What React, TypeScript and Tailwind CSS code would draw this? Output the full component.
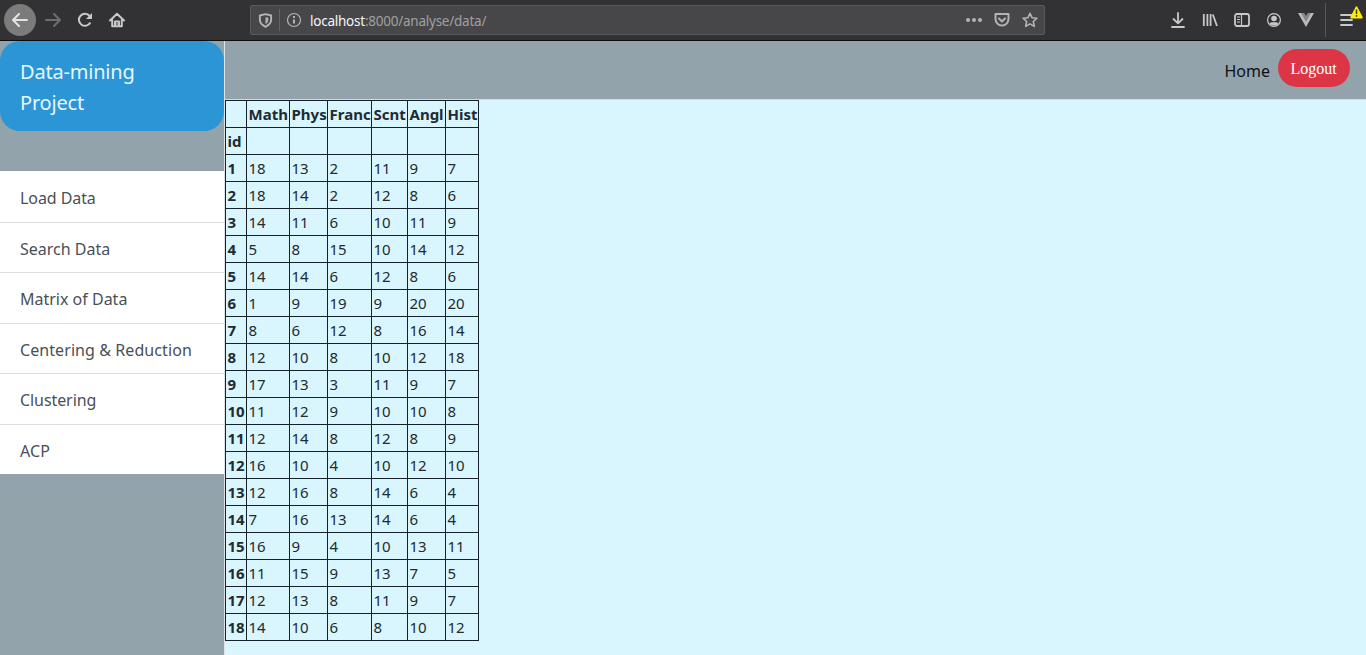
import React from "react";

const COLUMNS = ["Math", "Phys", "Franc", "Scnt", "Angl", "Hist"];

const MARKS = [
  [18, 13, 2, 11, 9, 7],
  [18, 14, 2, 12, 8, 6],
  [14, 11, 6, 10, 11, 9],
  [5, 8, 15, 10, 14, 12],
  [14, 14, 6, 12, 8, 6],
  [1, 9, 19, 9, 20, 20],
  [8, 6, 12, 8, 16, 14],
  [12, 10, 8, 10, 12, 18],
  [17, 13, 3, 11, 9, 7],
  [11, 12, 9, 10, 10, 8],
  [12, 14, 8, 12, 8, 9],
  [16, 10, 4, 10, 12, 10],
  [12, 16, 8, 14, 6, 4],
  [7, 16, 13, 14, 6, 4],
  [16, 9, 4, 10, 13, 11],
  [11, 15, 9, 13, 7, 5],
  [12, 13, 8, 11, 9, 7],
  [14, 10, 6, 8, 10, 12],
];

const MENU = [
  { label: "Load Data", spacing: "tracking-[-0.08px]" },
  { label: "Search Data", spacing: "tracking-[0px]" },
  { label: "Matrix of Data", spacing: "tracking-[0px]" },
  { label: "Centering & Reduction", spacing: "tracking-[0.08px]" },
  { label: "Clustering", spacing: "tracking-[-0.08px]" },
  { label: "ACP", spacing: "tracking-[0.1px]" },
];

function Icon({ children, className = "" }: { children: React.ReactNode; className?: string }) {
  return (
    <svg
      viewBox="0 0 16 16"
      className={`size-4 shrink-0 ${className}`}
      fill="none"
      stroke="currentColor"
      strokeWidth="2"
      strokeLinecap="round"
      strokeLinejoin="round"
    >
      {children}
    </svg>
  );
}

function BrowserBar() {
  return (
    <div className="flex h-[41px] shrink-0 items-start border-b border-[#0c0c0d] bg-[#323234] text-[#c8c8c9]">
      <div className="flex h-10 w-[250px] items-center pl-1">
        <span className="flex size-8 items-center justify-center rounded-full bg-[#7b7b7c] text-[#e4e4e4]">
          <Icon>
            <path d="M15 8H1.500M7 2 1 8l6 6" />
          </Icon>
        </span>
        <Icon className="ml-[9px] text-[#6d6d6e]">
          <path d="M1 8h13.500M9 2l6 6-6 6" />
        </Icon>
        <Icon className="ml-4">
          <path d="M13.300 10.500A6 6 0 1 1 12.600 4" strokeLinecap="butt" />
          <path d="M15 1v6H9z" fill="currentColor" stroke="none" />
        </Icon>
        <Icon className="ml-4">
          <path d="M1 8.500 8 1.800l7 6.700M3.200 8v6.200h9.600V8" />
          <path d="M6 15V9.500h4V15M8 11.500v1" strokeLinecap="butt" />
        </Icon>
      </div>
      <div className="mt-[5px] flex h-[30px] w-[795px] items-center rounded-[2px] border border-[#5a5a5c] bg-[#474749] pl-[7px] pr-[6px] text-[#b4b4b5]">
        <Icon className="!size-[15px]">
          <path d="M8 1.200 14 2.700v4.600c0 3.200-2.300 5.700-6 7.500-3.700-1.800-6-4.300-6-7.500V2.700z" />
          <path d="M8 4.500v7.500c2-1.200 3-2.800 3-4.700V5.100z" fill="currentColor" stroke="none" />
        </Icon>
        <span className="ml-[6px] h-[22px] w-px bg-[#636365]" />
        <Icon className="ml-[6px]">
          <circle cx="8" cy="8" r="6.500" strokeWidth="1.200" />
          <path d="M8 7.500v4" strokeLinecap="butt" />
          <path d="M8 4v2" strokeLinecap="butt" />
        </Icon>
        <span className="ml-2 pt-[2px] text-[13.500px] leading-5 tracking-[-0.24px] whitespace-pre text-[#a0a0a2]">
          <span className="text-[#f5f5f6]">localhost</span>:8000/analyse/data/
        </span>
        <span className="flex-1" />
        <Icon>
          <g fill="currentColor" stroke="none">
            <circle cx="2" cy="8" r="2" />
            <circle cx="8" cy="8" r="2" />
            <circle cx="14" cy="8" r="2" />
          </g>
        </Icon>
        <Icon className="ml-3">
          <path d="M1.500 2h13v5a6.500 6.500 0 0 1-13 0z" />
          <path d="m5 6.500 3 3 3-3" />
        </Icon>
        <Icon className="ml-3">
          <path
            d="m8 1.300 2 4.400 4.900.5-3.600 3.300 1 4.900L8 11.900l-4.300 2.500 1-4.900L1.100 6.200 6 5.700z"
            strokeWidth="1.600"
          />
        </Icon>
      </div>
      <div className="flex h-10 flex-1 items-center pl-[125px]">
        <Icon>
          <path d="M8 1v10M3.500 7 8 11.300 12.500 7M2 15h12" strokeWidth="1.800" />
        </Icon>
        <Icon className="ml-4">
          <path d="M1.800 2v12M5.400 2v12M8.600 2v12M10.800 2.500 15 14" strokeLinecap="butt" strokeWidth="1.800" />
        </Icon>
        <Icon className="ml-4">
          <rect x="1" y="2" width="14" height="12" rx="2" strokeWidth="1.800" />
          <path d="M7.500 2v12" strokeLinecap="butt" strokeWidth="1.200" />
          <path d="M3 5h3M3 7.500h3M3 10h3" strokeLinecap="butt" strokeWidth="1.200" />
        </Icon>
        <Icon className="ml-4">
          <circle cx="8" cy="8" r="6.400" strokeWidth="1.200" />
          <circle cx="8" cy="6.500" r="2.800" fill="currentColor" stroke="none" />
          <path d="M3.500 11.500C5 9.700 6 10.200 8 10.200s3-.5 4.500 1.300C11 13.200 9.500 13.500 8 13.500s-3-.3-4.500-2z" fill="currentColor" stroke="none" />
        </Icon>
        <Icon className="ml-4">
          <path d="M0 1h3.500L8 9l4.500-8H16L8 15z" fill="#b9b9ba" stroke="none" />
          <path d="M3.500 1H6.200L8 4l1.800-3h2.700L8 9z" fill="#88888a" stroke="none" />
        </Icon>
        <span className="ml-[11px] h-[34px] w-px bg-[#5b5b5d]" />
        <div className="relative ml-[14px] h-4 w-4">
          <Icon>
            <path d="M1 3h11M1 8h11M1 13h11" strokeWidth="1.800" />
          </Icon>
          <svg viewBox="0 0 13 13" className="absolute -top-[6px] left-[10px] size-[13px]">
            <path d="M6.500 1.200 11.800 11.500H1.200z" fill="#ffeb00" stroke="#ffeb00" strokeWidth="1.800" strokeLinejoin="round" />
            <path d="M6.500 3.500v4.500M6.500 9v1.700" stroke="#3a3910" strokeWidth="1.500" />
          </svg>
        </div>
      </div>
    </div>
  );
}

function Sidebar() {
  return (
    <aside className="w-[225px] shrink-0 border-r border-[#dfe3e6] bg-[#93a3ac]">
      <div className="mb-10 h-[90px] rounded-[20px] bg-[#2b95d6] px-5 pt-[15px] text-[20px] leading-[31px] tracking-[-0.2px] text-[#e6f7ff]">
        Data-mining
        <br />
        Project
      </div>
      <nav className="flex h-[303px] flex-col bg-white">
        {MENU.map(({ label, spacing }) => (
          <a
            key={label}
            className={`flex flex-1 items-center border-t border-[#dcdddf] px-5 pt-[3px] text-[16px] whitespace-nowrap text-[#495057] first:border-white ${spacing}`}
          >
            {label}
          </a>
        ))}
      </nav>
    </aside>
  );
}

function MarksTable() {
  return (
    <table className="w-[254px] table-fixed border-separate border-spacing-0 border-t border-l border-[#16222a] text-left text-[#212b31]">
      <colgroup>
        <col className="w-[21px]" />
        <col className="w-[43px]" />
        <col className="w-[38px]" />
        <col className="w-[44px]" />
        <col className="w-[36px]" />
        <col className="w-[38px]" />
        <col className="w-[33px]" />
      </colgroup>
      <tbody className="[&_td]:border-r [&_td]:border-b [&_td]:border-[#16222a] [&_td]:p-0 [&_td]:pl-[1.500px] [&_td]:text-[15px] [&_th]:border-r [&_th]:border-b [&_th]:border-[#16222a] [&_th]:p-0 [&_th]:pl-[1.500px] [&_th]:text-[15px] [&_th]:font-bold [&_tr]:h-[27px] [&_tr]:leading-[24px]">
        <tr>
          <th />
          {COLUMNS.map((name) => (
            <th key={name} className="whitespace-nowrap">
              {name}
            </th>
          ))}
        </tr>
        <tr>
          <th>id</th>
          {COLUMNS.map((name) => (
            <td key={name} />
          ))}
        </tr>
        {MARKS.map((row, i) => (
          <tr key={i}>
            <th>{i + 1}</th>
            {row.map((mark, j) => (
              <td key={j}>{mark}</td>
            ))}
          </tr>
        ))}
      </tbody>
    </table>
  );
}

export default function App() {
  return (
    <div className="flex h-[655px] w-[1366px] flex-col overflow-hidden font-['Noto_Sans','Open_Sans',sans-serif]">
      <BrowserBar />
      <div className="flex min-h-0 flex-1">
        <Sidebar />
        <main className="flex-1 bg-[#d9f5fe]">
          <header className="flex h-[59px] items-start justify-end border-b border-[#cbdde5] bg-[#93a3ac] pt-2 pr-4">
            <a className="mt-[10px] mr-2 text-[16px] leading-6 text-[#0c1317]">Home</a>
            <button className="h-[38px] w-[72px] rounded-[19px] bg-[#dc3545] pt-0.5 pr-px font-['Liberation_Serif',serif] text-[16px] text-white">
              Logout
            </button>
          </header>
          <MarksTable />
        </main>
      </div>
    </div>
  );
}
